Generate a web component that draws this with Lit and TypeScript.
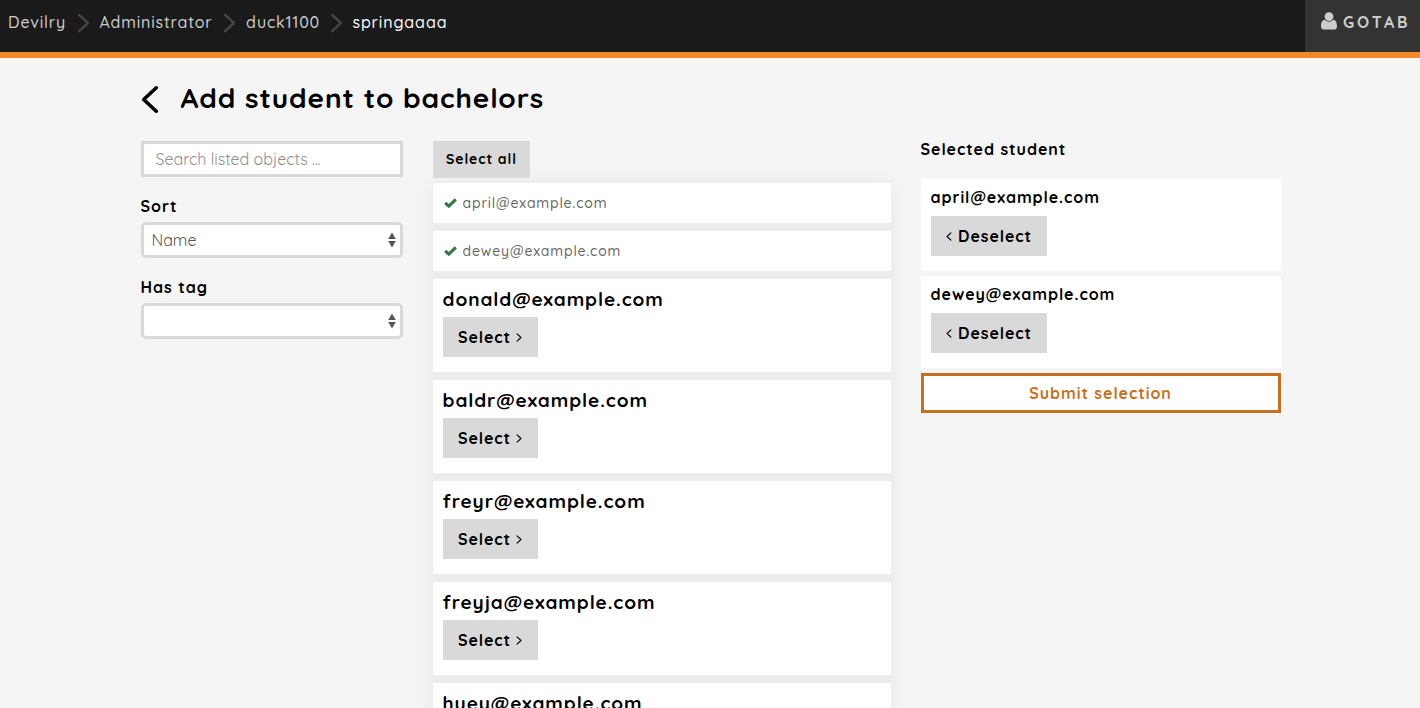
import { LitElement, html, css, svg } from "lit";
import { customElement, property } from "lit/decorators.js";

const chevron = (cls: string, points: string, width: number) => html`<svg
  class=${cls}
  viewBox="0 0 20 32"
  fill="none"
  stroke="currentColor"
  stroke-width=${width}
  stroke-linecap="round"
  stroke-linejoin="round"
>${svg`<polyline points=${points}></polyline>`}</svg>`;

const RIGHT = "3,3 17,16 3,29";
const LEFT = "17,3 3,16 17,29";

@customElement("top-bar")
export class TopBar extends LitElement {
  static styles = css`
    :host { display: block; }
    .bar {
      display: flex; justify-content: space-between; box-sizing: border-box;
      height: 58px; background: #1a1a1a; border-bottom: 6px solid #f38a2a;
    }
    .crumbs { display: flex; padding-left: 8px; height: 44px; align-items: center; color: #ccc; font-size: 16px; font-weight: 500; }
    .crumb { white-space: nowrap; letter-spacing: 0.8px; }
    .c0 { width: 70px; }
    .c1 { width: 125px; }
    .c2 { width: 85px; }
    .c3 { color: #fff; letter-spacing: 0.85px; }
    .sep { width: 13px; height: 20px; margin: 2px 10px 0 -1.5px; color: #444; }
    .user {
      display: flex; align-items: center; box-sizing: border-box; width: 115px; height: 52px;
      padding: 0 0 8px 16px; background: #333; color: #ccc;
      font-weight: 700; font-size: 16px; letter-spacing: 2.9px;
    }
    .person { width: 16px; height: 18px; margin: 0 6px 2px 0; }
  `;
  render() {
    const crumbs = ["Devilry", "Administrator", "duck1100", "springaaaa"];
    return html`<header class="bar">
      <nav class="crumbs">
        ${crumbs.map((c, i) => html`${i ? chevron("sep", RIGHT, 4) : ""}<span class="crumb c${i}">${c}</span>`)}
      </nav>
      <div class="user">
        <svg class="person" viewBox="0 0 16 18" fill="currentColor">
          <circle cx="8" cy="4.6" r="4.4"></circle>
          <path d="M3.7 7.8C1.1 8.1 0 10.8 0 14.2 0 16.4 1.3 17.6 3 17.6H13C14.7 17.6 16 16.4 16 14.2 16 10.8 14.9 8.1 12.3 7.8 11.2 9 9.7 9.8 8 9.8S4.8 9 3.7 7.8Z"></path>
        </svg>
        <span>GOTAB</span>
      </div>
    </header>`;
  }
}

@customElement("select-field")
export class SelectField extends LitElement {
  @property() label = "";
  @property() value = "";
  static styles = css`
    :host { display: block; }
    .label { font-weight: 700; font-size: 16px; line-height: 24px; letter-spacing: 1px; margin-bottom: 4px; }
    .box {
      display: flex; align-items: center; justify-content: space-between; box-sizing: border-box;
      height: 36px; padding: 0 3.7px 0 8px; border: 3px solid #d9d9d9; border-radius: 5px;
      background: #fff; color: #555; font-size: 16px; font-weight: 450;
    }
    .arrows { width: 8px; height: 16px; }
  `;
  render() {
    return html`<div class="label">${this.label}</div>
      <div class="box">
        <span>${this.value}</span>
        <svg class="arrows" viewBox="0 0 8 16" fill="#555"><path d="M4 0.5 7.8 7H.2ZM4 15.5 7.8 9H.2Z"></path></svg>
      </div>`;
  }
}

@customElement("app-root")
export class AppRoot extends LitElement {
  private picked = ["april@example.com", "dewey@example.com"];
  private available = ["donald", "baldr", "freyr", "freyja", "huey"];

  static styles = css`
    :host {
      display: block; height: 708px; overflow: hidden; background: #f5f5f5; color: #000;
      font-family: Quicksand, Lato, "Open Sans", sans-serif;
    }
    .page { width: 1140px; margin: 0 auto; padding: 22px 0 0 1px; }
    .heading { display: flex; align-items: center; height: 38px; }
    .back { width: 18px; height: 29px; margin: 0 22px 0 0; }
    .title { margin: 0; padding-bottom: 2px; font-size: 28px; font-weight: 700; line-height: 36px; letter-spacing: 0.9px; }
    .columns { display: grid; grid-template-columns: 262px 458px 360px; column-gap: 30px; margin-top: 23px; align-items: start; }
    .filters { display: flex; flex-direction: column; }
    .search {
      box-sizing: border-box; height: 36px; padding: 0 11px 0 12px; border: 3px solid #d9d9d9;
      background: #fff; color: #8f8f8f; font-size: 16px; font-weight: 450; letter-spacing: -0.02px; line-height: 31px; margin-bottom: 17px;
    }
    .field { margin-bottom: 17px; }
    .button {
      display: inline-flex; align-items: center; justify-content: center; box-sizing: border-box;
      height: 40px; background: #d9d9d9; font-size: 16px; font-weight: 700; letter-spacing: 0.95px; white-space: nowrap;
    }
    .all { width: 97px; height: 37px; padding: 0 0 2px 1px; font-size: 14px; letter-spacing: 0.9px; }
    .select { width: 95px; }
    .deselect { width: 116px; padding-left: 1px; }
    .chev { width: 6px; height: 9px; }
    .select .chev { margin-left: 5px; }
    .deselect .chev { margin-right: 6px; }
    .list {
      display: flex; flex-direction: column; gap: 8px; margin-top: 5px;
      background: #ececec; box-shadow: 0 0 20px rgba(0, 0, 0, 0.065);
    }
    .done { display: flex; align-items: center; height: 40px; background: #fff; padding-left: 11px; color: #666; font-size: 14px; font-weight: 500; letter-spacing: 0.85px; }
    .check { width: 13px; height: 10px; margin-right: 6px; }
    .card { box-sizing: border-box; height: 93px; padding: 6px 10px; background: #fff; }
    .email { font-size: 19px; font-weight: 700; line-height: 28px; letter-spacing: 0.95px; margin-bottom: 4px; }
    .side { display: flex; flex-direction: column; gap: 5px; }
    .subtitle { height: 33px; font-size: 16px; font-weight: 700; line-height: 17px; letter-spacing: 0.95px; }
    .chosen { box-sizing: border-box; height: 92px; padding: 6px 10px; background: #fff; }
    .name { font-size: 16px; font-weight: 700; line-height: 25px; letter-spacing: 0.95px; margin-bottom: 6px; }
    .submit {
      display: flex; align-items: center; justify-content: center; box-sizing: border-box; height: 40px;
      border: 3px solid #c77020; background: #fff; color: #c77020; font-size: 16px; font-weight: 700; letter-spacing: 0.95px;
    }
  `;

  render() {
    return html`
      <top-bar></top-bar>
      <main class="page">
        <div class="heading">
          ${chevron("back", LEFT, 4)}
          <h1 class="title">Add student to bachelors</h1>
        </div>
        <div class="columns">
          <section class="filters">
            <div class="search">Search listed objects ...</div>
            <select-field class="field" label="Sort" value="Name"></select-field>
            <select-field class="field" label="Has tag"></select-field>
          </section>
          <section>
            <div class="button all">Select all</div>
            <div class="list">
              ${this.picked.map((p) => html`<div class="done">
                <svg class="check" viewBox="0 0 13 10" fill="none" stroke="#337544" stroke-width="3"><path d="M1.2 4.8 4.8 8.2 11.8 1.4"></path></svg>
                <span>${p}</span>
              </div>`)}
              ${this.available.map((a) => html`<div class="card">
                <div class="email">${a}@example.com</div>
                <div class="button select">Select${chevron("chev", RIGHT, 4)}</div>
              </div>`)}
            </div>
          </section>
          <section class="side">
            <div class="subtitle">Selected student</div>
            ${this.picked.map((p) => html`<div class="chosen">
              <div class="name">${p}</div>
              <div class="button deselect">${chevron("chev", LEFT, 4)}Deselect</div>
            </div>`)}
            <div class="submit">Submit selection</div>
          </section>
        </div>
      </main>
    `;
  }
}
